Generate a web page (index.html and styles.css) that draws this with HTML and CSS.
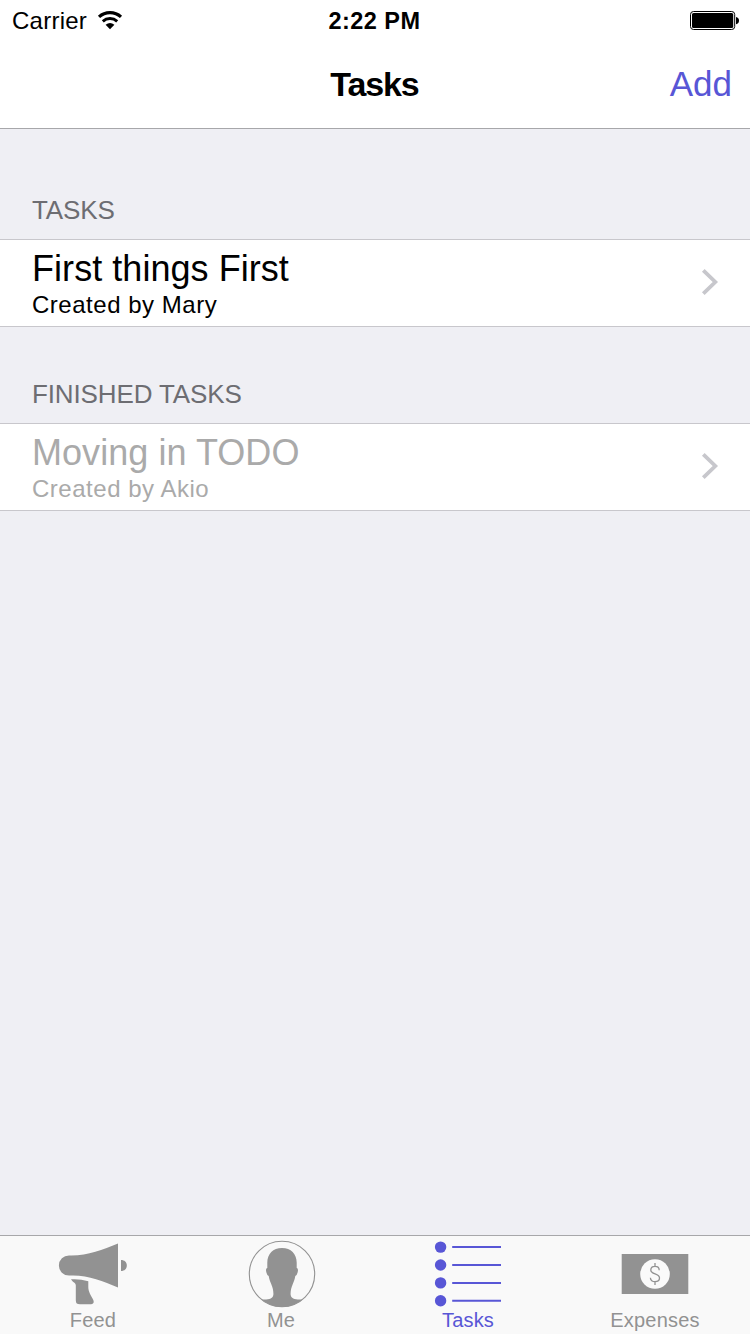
FILE: index.html
```html
<!DOCTYPE html>
<html lang="en">
<head>
<meta charset="utf-8">
<title>Tasks</title>
<link rel="stylesheet" href="styles.css">
</head>
<body>
<div class="screen">
  <header class="top">
    <div class="status">
      <div class="carrier"><span class="carrier-name">Carrier</span>
        <svg class="wifi" width="26" height="20" viewBox="0 0 26 20" fill="none" stroke="#000">
          <path d="M2 6.900a16.500 16.500 0 0 1 22 0" stroke-width="3.200"/>
          <path d="M5.800 11.300a11 11 0 0 1 14.400 0" stroke-width="3"/>
          <path d="M8.600 14.700a7 7 0 0 1 8.800 0L13 19.200z" fill="#000" stroke="none"/>
        </svg>
      </div>
      <div class="clock">2:22 PM</div>
      <svg class="battery" width="50" height="20" viewBox="0 0 50 20">
        <rect x=".5" y="1.500" width="44.200" height="18" rx="3" fill="none" stroke="#000"/>
        <rect x="2" y="2.900" width="41.200" height="15.200" rx="1.600"/>
        <path d="M46 6.900c2 .3 3 1.700 3 3.700s-1 3.400-3 3.700z"/>
      </svg>
    </div>
    <div class="nav">
      <h1 class="nav-title">Tasks</h1>
      <span class="nav-add">Add</span>
    </div>
  </header>
  <main class="content">
    <h2 class="section first">TASKS</h2>
    <div class="row">
      <div class="row-text">
        <div class="title">First things First</div>
        <div class="sub">Created by Mary</div>
      </div>
      <svg class="chevron" width="18" height="28" viewBox="0 0 18 28"><path d="M2.300 2.300 14.300 14 2.300 25.700" fill="none" stroke="#c7c7cc" stroke-width="3.800"/></svg>
    </div>
    <h2 class="section">FINISHED TASKS</h2>
    <div class="row done">
      <div class="row-text">
        <div class="title">Moving in TODO</div>
        <div class="sub">Created by Akio</div>
      </div>
      <svg class="chevron" width="18" height="28" viewBox="0 0 18 28"><path d="M2.300 2.300 14.300 14 2.300 25.700" fill="none" stroke="#c7c7cc" stroke-width="3.800"/></svg>
    </div>
  </main>
  <nav class="tabs">
    <div class="tab">
      <svg width="70" height="70" viewBox="0 0 70 70" fill="#929292">
        <path d="M11 15.400C29 16 44 10 60 3.500V47.500C44 41 29 34.500 11 35.600a10.100 10.100 0 0 1 0-20.200z"/>
        <path d="M63 20c3.500 0 5.800 2.200 5.800 5.500s-2.300 5.500-5.800 5.500z"/>
        <path d="M13 39.300c6-.4 11.500.2 17.300 2V47c0 5 2.800 8.500 5 13 1.200 3-.5 4.300-3 4.300H22c-3 0-4.200-1-4.200-4V45.500c0-2.800-3-3-4.800-6.200z"/>
      </svg>
      <span class="label">Feed</span>
    </div>
    <div class="tab">
      <svg class="avatar" width="70" height="70" viewBox="0 0 70 70">
        <circle cx="35" cy="34" r="32.700" fill="none" stroke="#929292" stroke-width="1.100"/>
        <path d="M35 8c9 0 14.700 6 14.700 14.500V28c1.500.3 1.500 2.500.9 4.500s-1.300 3.200-2.300 3.500c-.6 3.500-1.500 5.500-2.500 8-1.700 4-2.300 7-2.200 10.500.4 4.500 5 5.500 12.200 5C49.800 64 43 67 35 67s-14.800-3-20.800-7.500c7.200.5 11.800-.5 12.200-5 .1-3.500-.5-6.500-2.200-10.500-1-2.500-1.900-4.500-2.500-8-1-.3-1.700-1.500-2.300-3.500s-.6-4.200.9-4.500v-5.500C20.300 14 26 8 35 8z" fill="#929292"/>
      </svg>
      <span class="label">Me</span>
    </div>
    <div class="tab active">
      <svg width="70" height="70" viewBox="0 0 70 70" fill="#5856d6">
        <circle cx="7.600" cy="7.100" r="5.700"/><circle cx="7.600" cy="25" r="5.700"/><circle cx="7.600" cy="42.900" r="5.700"/><circle cx="7.600" cy="60.800" r="5.700"/>
        <path d="M19.200 6.100H68v2H19.200zM19.200 24H68v2H19.200zM19.200 42H68v2H19.200zM19.200 59.800H68v2H19.200z"/>
      </svg>
      <span class="label">Tasks</span>
    </div>
    <div class="tab">
      <svg width="70" height="70" viewBox="0 0 70 70">
        <path d="M1.700 14H68.300V54H1.700z" fill="#929292"/>
        <circle cx="35" cy="34" r="14.800" fill="#fafafa"/>
        <path d="M39.200 30.200c0-2.400-1.800-3.800-4.200-3.800s-4.200 1.500-4.200 3.600c0 5 8.700 2.800 8.700 8 0 2.300-2 3.700-4.500 3.700s-4.600-1.400-4.600-3.900M35 23v3.400M35 41.700V45" fill="none" stroke="#929292" stroke-width="1.300"/>
      </svg>
      <span class="label">Expenses</span>
    </div>
  </nav>
</div>
</body>
</html>
```
FILE: styles.css
```css
* { box-sizing: border-box; }
body { margin: 0; background: #efeff4; font-family: "Liberation Sans", Arial, sans-serif; color: #000; }
h1, h2 { margin: 0; font-weight: 400; }
svg { display: block; flex: none; }
.screen { width: 750px; height: 1334px; display: flex; flex-direction: column; overflow: hidden; white-space: nowrap; }
.top { height: 129px; background: #fff; border-bottom: 1px solid #a7a7aa; flex: none; }
.status { height: 40px; display: grid; grid-template-columns: 1fr auto 1fr; align-items: center; padding: 0 10px 0 12px; }
.carrier { display: flex; align-items: center; gap: 10px; font-size: 24px; }
.carrier-name { letter-spacing: .25px; padding-top: 1px; }
.clock { font-size: 23.5px; font-weight: 700; padding: 3px 3px 0 0; letter-spacing: .45px; }
.battery { justify-self: end; }
.nav { height: 88px; display: grid; grid-template-columns: 1fr auto 1fr; align-items: center; padding: 0 18px; }
.nav-title { grid-column: 2; font-size: 34px; font-weight: 700; letter-spacing: -1.1px; padding-right: 1px; }
.nav-add { justify-self: end; font-size: 35px; color: #5856d6; }
.content { flex: 1; }
.section { height: 96px; padding: 51px 32px 0; font-size: 26px; line-height: 32px; color: #6d6d72; letter-spacing: -.13px; }
.section.first { height: 110px; padding-top: 65px; }
.row { height: 88px; background: #fff; border-top: 1px solid #c8c7cc; border-bottom: 1px solid #c8c7cc; display: flex; justify-content: space-between; padding: 0 31px 0 32px; }
.row-text { padding-top: 8px; }
.title { font-size: 36px; line-height: 42px; letter-spacing: .05px; }
.sub { font-size: 24px; line-height: 28px; padding-top: 1px; letter-spacing: .52px; }
.chevron { margin-top: 28px; }
.done { color: #aaa; }
.tabs { height: 99px; border-top: 1px solid #a7a7aa; background: #f9f9f9; display: grid; grid-template-columns: 186px 190px 184px 190px; flex: none; }
.tab { display: flex; flex-direction: column; align-items: center; padding-top: 4px; color: #929292; }
.label { font-size: 20px; line-height: 20px; letter-spacing: .2px; }
.active { color: #5856d6; }
.avatar { margin-left: 2px; }
```
